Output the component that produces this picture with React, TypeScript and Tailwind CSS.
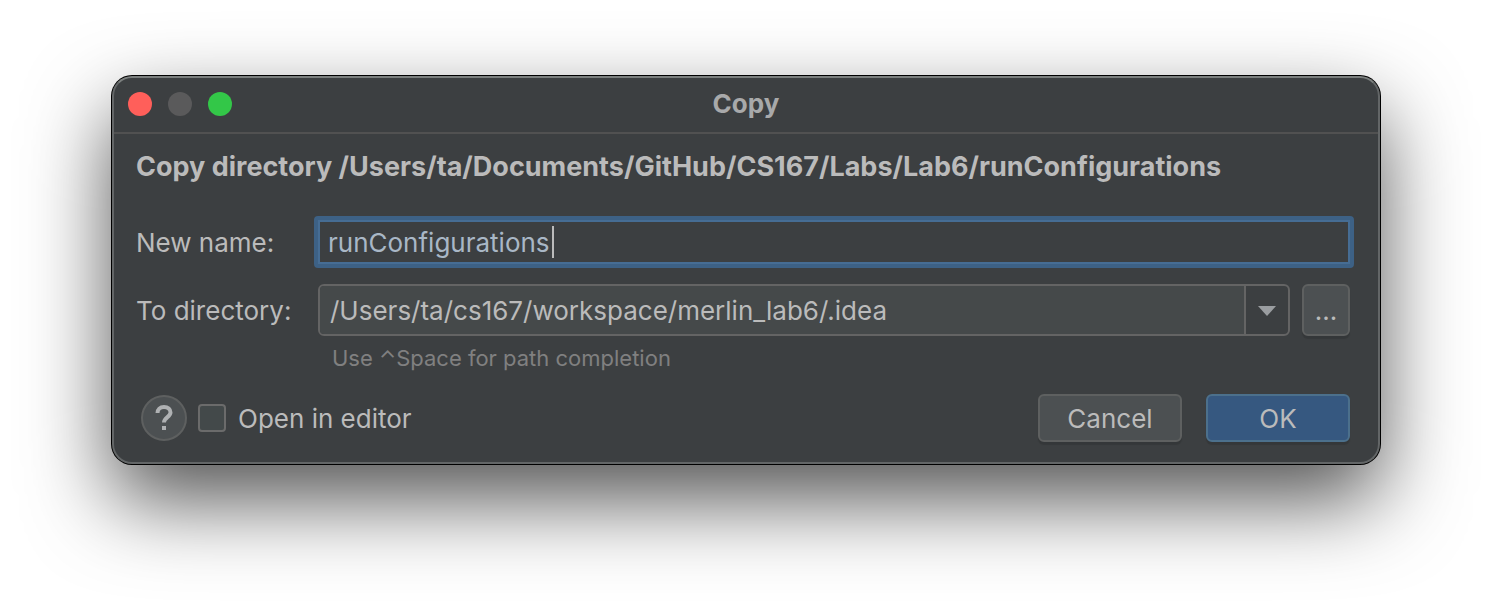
import React from "react";

const buttonBase =
  "flex items-center justify-center rounded-md border-2 pt-0.5 text-[#bbbbbb] shadow-[0_3px_1px_rgba(0,0,0,0.12)]";

function TitleBar() {
  return (
    <header className="grid h-14 grid-cols-[1fr_auto_1fr] items-center border-b-2 border-[#515151] px-3.5 pb-0.5">
      <div className="flex gap-4">
        <button type="button" aria-label="Close" className="size-6 rounded-full bg-[#ff5f5a]" />
        <button type="button" aria-label="Minimize" disabled className="size-6 rounded-full bg-[#5a5a5b]" />
        <button type="button" aria-label="Zoom" className="size-6 rounded-full bg-[#33c748]" />
      </div>
      <h1 className="leading-8 font-bold text-[#a8a9aa]">Copy</h1>
    </header>
  );
}

export default function App() {
  return (
    <main className="min-h-screen overflow-hidden bg-white px-28 pt-[76px] pb-[147px] font-['Inter','Liberation_Sans',sans-serif] text-[26px] leading-8 text-[#bbbbbb]">
      <section
        role="dialog"
        aria-label="Copy"
        className="rounded-[20px] border-2 border-[#636667] border-t-[#7b7f7e] bg-[#3c3f41] shadow-[0_0_0_1px_#000,0_36px_84px_rgba(0,0,0,0.68)]"
      >
        <TitleBar />
        <form className="px-[22px] pt-[17px] pb-5" onSubmit={(e) => e.preventDefault()}>
          <h2 className="text-[27px] leading-8 font-bold whitespace-nowrap">
            Copy directory /Users/ta/Documents/GitHub/CS167/Labs/Lab6/runConfigurations
          </h2>

          <div className="mt-[33px] grid grid-cols-[182px_1fr] items-center gap-y-4 pr-1.5">
            <label htmlFor="new-name" className="pt-0.5">New name:</label>
            <div className="relative -mx-1">
              <input
                id="new-name"
                type="text"
                defaultValue="runConfigurations"
                className="block h-[52px] w-full rounded border-4 border-[#3d6185] bg-[#3c3f41] px-2.5 text-[#a9b7c6] inset-ring-2 inset-ring-[#466d94] outline-none"
              />
              <span className="absolute top-2.5 left-[238px] h-8 w-0.5 bg-[#bbbbbb]" />
            </div>

            <label htmlFor="directory" className="pt-0.5">To directory:</label>
            <div className="flex gap-3">
              <div className="flex h-[52px] min-w-0 flex-1 overflow-hidden rounded-md border-2 border-[#646464]">
                <input
                  id="directory"
                  type="text"
                  defaultValue="/Users/ta/cs167/workspace/merlin_lab6/.idea"
                  className="min-w-0 flex-1 bg-[#45494a] px-2.5 pt-0.5 outline-none"
                />
                <button
                  type="button"
                  aria-label="Recent directories"
                  className="flex w-11 items-center justify-center border-l-2 border-[#646464] pt-0.5"
                >
                  <svg width="18" height="10" viewBox="0 0 18 10" fill="#9a9da0">
                    <path d="M0 0h18L9 10z" />
                  </svg>
                </button>
              </div>
              <button
                type="button"
                aria-label="Browse"
                className={`${buttonBase} h-[52px] w-12 border-[#5e6060] bg-[#4c5052]`}
              >
                ...
              </button>
            </div>
          </div>

          <p className="mt-2 pl-[196px] text-[22px] leading-7 text-[#808080]">
            Use ⌃Space for path completion
          </p>

          <div className="mt-[22px] flex items-center pr-1.5">
            <button
              type="button"
              aria-label="Help"
              className="ml-[5px] flex size-[46px] items-center justify-center rounded-full border-2 border-[#5e6060] bg-[#4c5052]"
            >
              <svg width="18" height="26" viewBox="0 0 18 26" fill="none">
                <path d="M2.5 8C2.5 4.500 5 2 9 2s6.500 2.300 6.500 5.500c0 4.500-6.500 4.800-6.500 10" stroke="#afb1b3" strokeWidth="4" />
                <path d="M7 21h4v4H7z" fill="#afb1b3" />
              </svg>
            </button>
            <label className="ml-[11px] flex items-center gap-3">
              <input
                type="checkbox"
                className="size-7 appearance-none rounded border-2 border-[#6b6b6b] bg-[#43494a]"
              />
              <span className="pt-0.5">Open in editor</span>
            </label>
            <div className="ml-auto flex gap-6">
              <button type="button" className={`${buttonBase} h-12 w-36 border-[#5e6060] bg-[#4c5052]`}>
                Cancel
              </button>
              <button type="submit" className={`${buttonBase} h-12 w-36 border-[#4c708c] bg-[#365880]`}>
                OK
              </button>
            </div>
          </div>
        </form>
      </section>
    </main>
  );
}
